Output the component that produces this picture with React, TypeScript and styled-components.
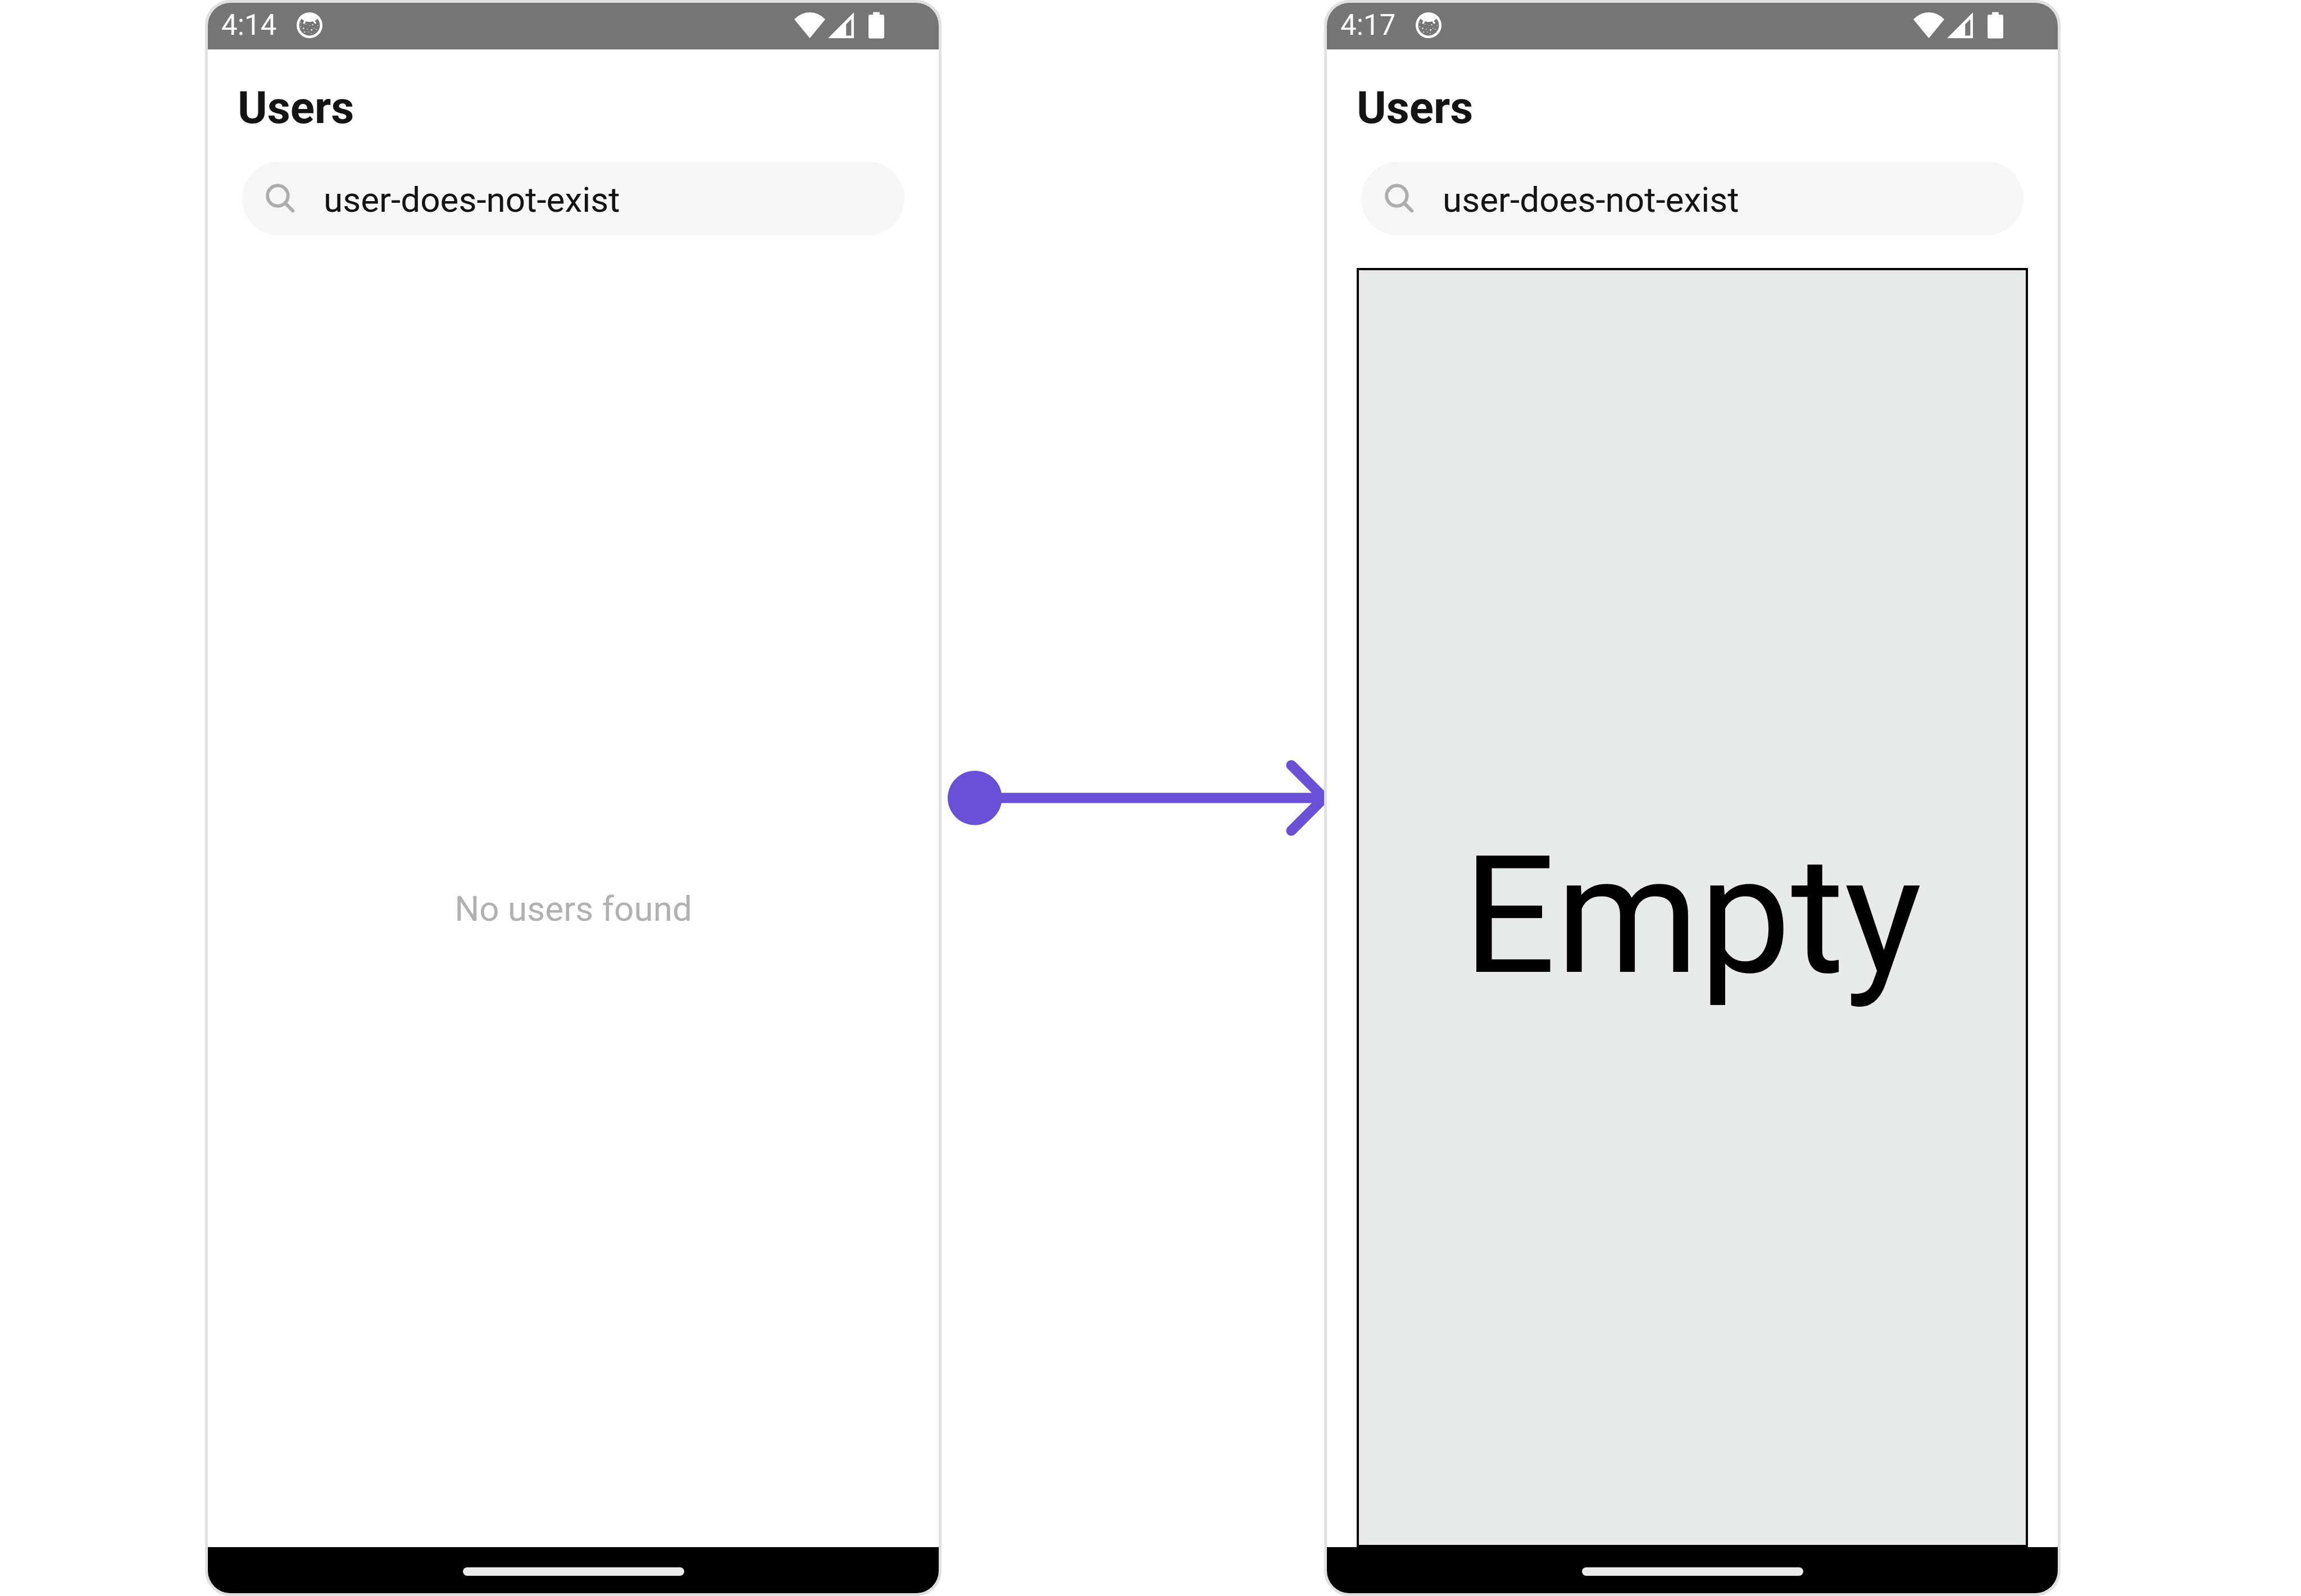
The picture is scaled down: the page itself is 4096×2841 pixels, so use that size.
import React from "react";
import styled, { createGlobalStyle } from "styled-components";

const GlobalStyle = createGlobalStyle`
  *, *::before, *::after { box-sizing: border-box; }
  html, body, #root { height: 100%; }
  body {
    margin: 0;
    background: #fff;
    font-family: Roboto, "Liberation Sans", sans-serif;
  }
`;

const Stage = styled.main`
  display: grid;
  grid-template-columns: 1311fr 681fr 1311fr;
  min-height: 100%;
  padding: 0 428px 0 365px;
`;

const Phone = styled.section`
  display: flex;
  flex-direction: column;
  overflow: hidden;
  border: 5px solid #e0e0e0;
  border-radius: 45px;
  background: #fff;
`;

const StatusBar = styled.header`
  display: flex;
  align-items: center;
  height: 83px;
  padding: 0 97px 4px 24px;
  background: #757575;
  color: #fff;
`;

const Clock = styled.time`
  font-size: 51px;
  line-height: 60px;
`;

const CatIcon = styled.svg`
  width: 46px;
  height: 46px;
  margin-left: 36px;
`;

const StatusIcons = styled.div`
  display: flex;
  align-items: center;
  gap: 5px;
  margin-left: auto;
`;

const StatusIcon = styled.svg<{ $width: number }>`
  width: ${(p) => p.$width}px;
  height: 48px;
`;

const BatteryIcon = styled(StatusIcon)`
  margin-left: 21px;
`;

const Title = styled.h1`
  margin: 56px 0 0;
  padding: 0 53px;
  color: #141414;
  font-size: 80px;
  font-weight: 700;
  line-height: 96px;
`;

const SearchBox = styled.label`
  display: flex;
  align-items: center;
  height: 131px;
  margin: 48px 61px 0;
  padding: 0 42px 2px;
  border-radius: 66px;
  background: #f6f6f6;
`;

const SearchIcon = styled.svg`
  flex: none;
  width: 52px;
  height: 52px;
  margin-right: 51px;
`;

const SearchInput = styled.input`
  flex: 1;
  min-width: 0;
  padding: 6px 0 0;
  border: 0;
  outline: 0;
  background: transparent;
  color: #141414;
  font: 400 62px/72px Roboto, "Liberation Sans", sans-serif;
`;

const Results = styled.div`
  display: flex;
  flex: 1;
  align-items: center;
  justify-content: center;
  margin: 58px 53px 0;
`;

const EmptyMessage = styled.p`
  margin: 4px 0 0;
  color: #b1b1b1;
  font-size: 62px;
  line-height: 72px;
`;

const EmptySlot = styled(Results)`
  padding-top: 30px;
  border: 4px solid #000;
  background: #e8eae9;
  color: #000;
  font-size: 291px;
  line-height: 340px;
`;

const NavigationBar = styled.footer`
  display: flex;
  justify-content: center;
  height: 82px;
  padding-top: 36px;
  background: #000;
`;

const HomeHandle = styled.div`
  width: 394px;
  height: 15px;
  border-radius: 8px;
  background: #ebebeb;
`;

const Arrow = styled.svg`
  align-self: center;
  width: 100%;
  overflow: hidden;
`;

const CAT_DOTS = [
  [8, 20, 0.9], [18, 23, 0.8], [31, 24, 1.3], [25.5, 25.5, 0.7], [41, 25.5, 0.8],
  [8, 28, 0.9], [13.5, 31, 1.4], [20.5, 33, 0.8], [29, 34, 1.5], [33.5, 30.5, 0.8],
  [38, 33, 0.9], [15.5, 38, 1], [23, 38, 0.9], [28, 41, 0.8],
];

function PhoneScreen({
  time,
  name,
  children,
}: {
  time: string;
  name: string;
  children: React.ReactNode;
}) {
  return (
    <Phone>
      <StatusBar>
        <Clock>{time}</Clock>
        <CatIcon viewBox="0 0 50 50" aria-hidden="true">
          <circle cx="25" cy="25" r="22.5" fill="none" stroke="#fff" strokeWidth="5" />
          <path
            d="M5 10Q12 1 25 1T45 10L40 12.5L35.5 16.5L38 20.5Q37 23 35 22L32 17.5Q25 19.5 18 17.5L16 21.5Q13.5 24 12.5 21L14.5 16.5L10 12.5Z"
            fill="#fff"
          />
          {CAT_DOTS.map(([cx, cy, r]) => (
            <circle key={`${cx}-${cy}`} cx={cx} cy={cy} r={r} fill="#fff" />
          ))}
        </CatIcon>
        <StatusIcons>
          <StatusIcon $width={55} viewBox="0 0 60 52" aria-hidden="true">
            <path d="M0 14.5Q13 1 30 1T60 14.5L30 51Z" fill="#fff" />
          </StatusIcon>
          <StatusIcon $width={46} viewBox="0 0 50 52" aria-hidden="true">
            <path d="M50 1V51H0ZM45 14L35 24V46H45Z" fill="#fff" fillRule="evenodd" />
          </StatusIcon>
          <BatteryIcon $width={28} viewBox="0 0 31 52" aria-hidden="true">
            <path
              d="M9 0H22V5H28Q31 5 31 8V49Q31 52 28 52H3Q0 52 0 49V8Q0 5 3 5H9Z"
              fill="#fff"
            />
          </BatteryIcon>
        </StatusIcons>
      </StatusBar>
      <Title>Users</Title>
      <SearchBox htmlFor={name}>
        <SearchIcon viewBox="0 0 57 57" aria-hidden="true">
          <g fill="none" stroke="#adadad" strokeWidth="6.5" strokeLinecap="round">
            <circle cx="23.5" cy="23.5" r="20" />
            <path d="M38 38L53 53" />
          </g>
        </SearchIcon>
        <SearchInput
          id={name}
          type="text"
          aria-label="Search users"
          defaultValue="user-does-not-exist"
        />
      </SearchBox>
      {children}
      <NavigationBar>
        <HomeHandle />
      </NavigationBar>
    </Phone>
  );
}

export default function App() {
  return (
    <>
      <GlobalStyle />
      <Stage>
        <PhoneScreen time="4:14" name="search-default">
          <Results>
            <EmptyMessage>No users found</EmptyMessage>
          </Results>
        </PhoneScreen>
        <Arrow viewBox="0 0 747 150" aria-hidden="true">
          <circle cx="65" cy="75" r="53" fill="#6851d7" />
          <path
            d="M65 75H747M683 11L747 75L683 139"
            fill="none"
            stroke="#6851d7"
            strokeWidth="20"
            strokeLinecap="round"
          />
        </Arrow>
        <PhoneScreen time="4:17" name="search-custom">
          <EmptySlot>Empty</EmptySlot>
        </PhoneScreen>
      </Stage>
    </>
  );
}
